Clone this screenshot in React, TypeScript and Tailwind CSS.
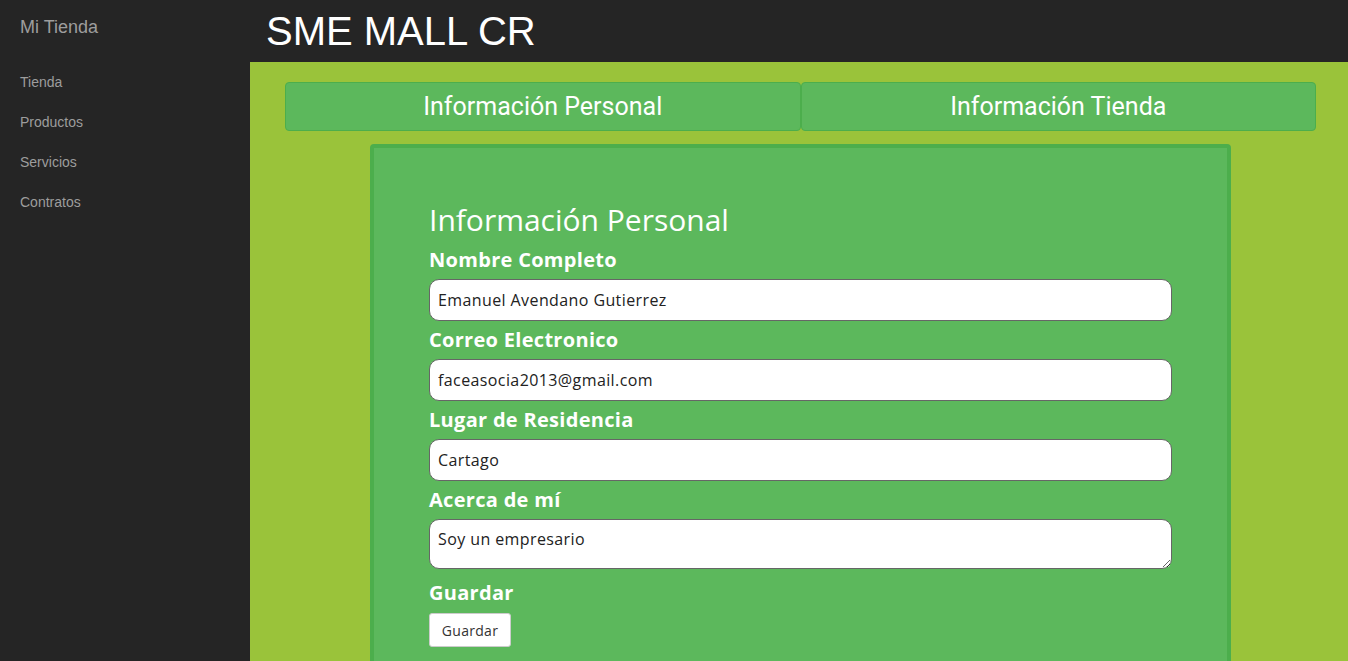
import React from "react";

const labelCls =
  "block text-white font-bold text-[20px] tracking-[0.3px] leading-[26px] pt-[6px] pb-[6px]";
const inputCls =
  "block w-full h-[42px] bg-white border border-[#666] rounded-[10px] px-[8px] text-[16px] tracking-[0.4px] text-[#222] outline-none";

export default function App() {
  const open = { fontFamily: '"Open Sans", "Noto Sans", sans-serif' };
  return (
    <div
      className="flex h-screen w-full overflow-hidden bg-[#252525]"
      style={{ fontFamily: '"Liberation Sans", Arial, sans-serif' }}
    >
      <aside className="w-[250px] shrink-0 bg-[#252525]">
        <div className="h-[62px] pl-[20px] pt-[17px] text-[18px] leading-[20px] text-[#9d9d9d]">
          Mi Tienda
        </div>
        <ul>
          {["Tienda", "Productos", "Servicios", "Contratos"].map((t) => (
            <li
              key={t}
              className="pl-[20px] py-[10px] text-[14px] leading-[20px] text-[#9d9d9d]"
            >
              {t}
            </li>
          ))}
        </ul>
      </aside>
      <div className="flex flex-1 flex-col">
        <header className="h-[62px] shrink-0 bg-[#252525] pl-[16px] pt-[8px]">
          <h1 className="text-[40px] leading-[46px] text-white">SME MALL CR</h1>
        </header>
        <main className="flex-1 bg-[#9ac33a] pt-[20px]">
          <div
            className="ml-[35px] flex w-[1031px]"
            style={{ fontFamily: 'Roboto, "Liberation Sans", sans-serif' }}
          >
            {["Información Personal", "Información Tienda"].map((t) => (
              <div
                key={t}
                className="flex h-[49px] flex-1 items-center justify-center rounded-[4px] border border-[#4cae4c] bg-[#5cb85c] text-[25px] text-white"
              >
                {t}
              </div>
            ))}
          </div>
          <section
            className="ml-[120px] mt-[13px] w-[861px] rounded-[4px] border-[4px] border-[#4cae4c] bg-[#5cb85c] px-[55px] pt-[55px] pb-[40px]"
            style={open}
          >
            <h2 className="mb-[5px] text-[30px] leading-[33px] text-white">
              Información Personal
            </h2>
            <label className={labelCls}>Nombre Completo</label>
            <input
              className={inputCls}
              style={open}
              defaultValue="Emanuel Avendano Gutierrez"
            />
            <label className={labelCls}>Correo Electronico</label>
            <input
              className={inputCls}
              style={open}
              defaultValue="faceasocia2013@gmail.com"
            />
            <label className={labelCls}>Lugar de Residencia</label>
            <input className={inputCls} style={open} defaultValue="Cartago" />
            <label className={labelCls}>Acerca de mí</label>
            <textarea
              className="block h-[50px] w-full rounded-[10px] border border-[#666] bg-white px-[8px] pt-[7px] text-[16px] tracking-[0.4px] leading-[24px] text-[#222] outline-none"
              style={open}
              defaultValue="Soy un empresario"
            />
            <div className="pt-[11px] pb-[7px] text-[20px] tracking-[0.3px] font-bold leading-[26px] text-white">
              Guardar
            </div>
            <button
              className="h-[34px] w-[82px] rounded-[3px] border border-[#ccc] bg-white text-[14px] tracking-[0.3px] text-[#333]"
              style={open}
            >
              Guardar
            </button>
          </section>
        </main>
      </div>
    </div>
  );
}
